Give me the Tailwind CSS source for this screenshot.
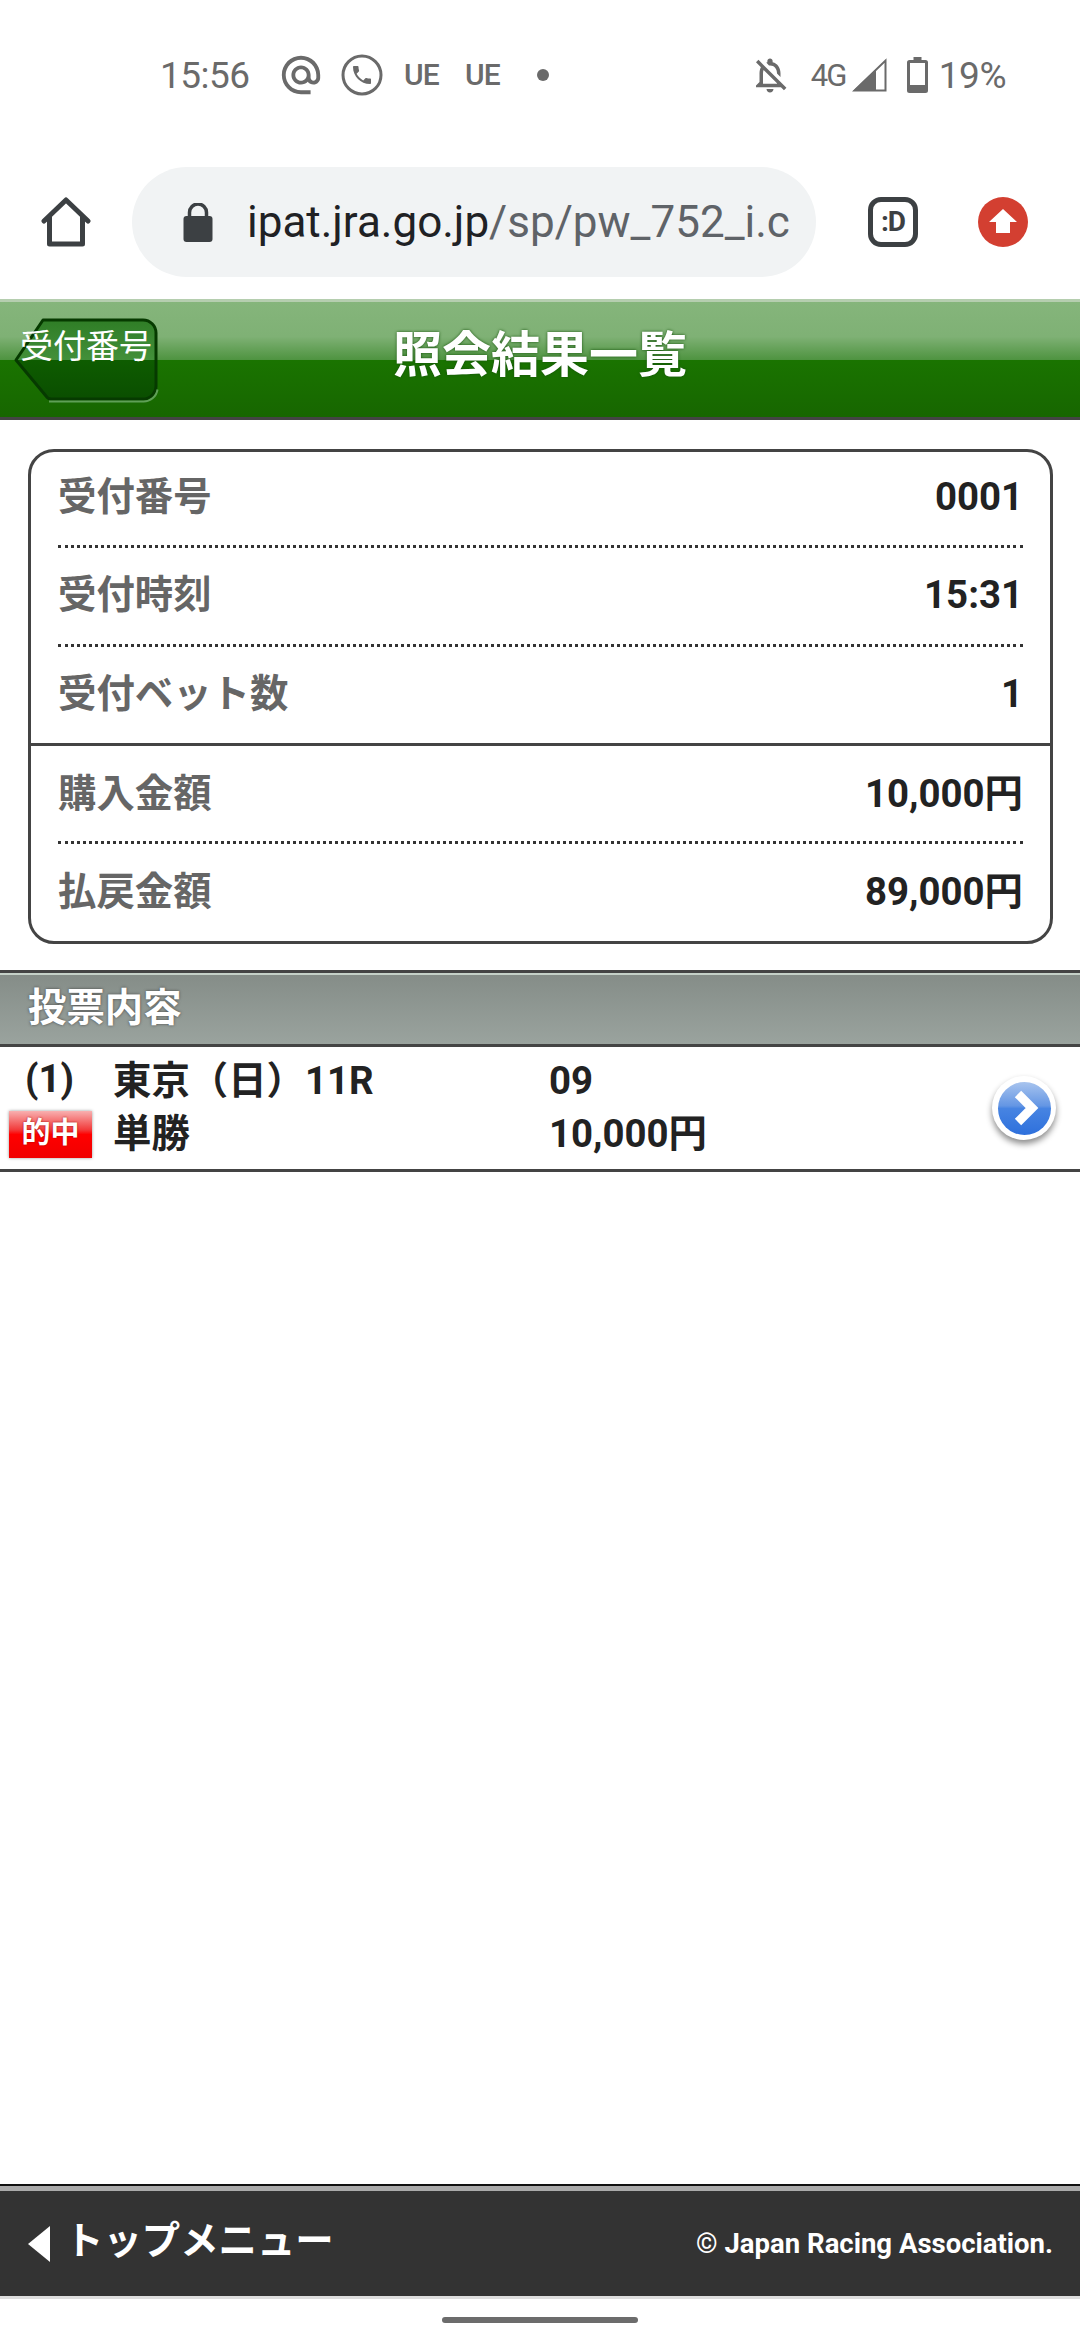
<!DOCTYPE html>
<html lang="ja">
<head>
    <meta charset="UTF-8">
    <meta name="viewport" content="width=device-width, initial-scale=1.0">
    <title>照会結果一覧</title>
    <script src="https://cdn.jsdelivr.net/npm/@tailwindcss/browser@4"></script>
</head>
<body class="bg-white font-['Roboto','Noto_Sans_CJK_JP',sans-serif]">
<div class="flex flex-col w-[1080px] h-[2340px] overflow-hidden">

    <!-- Status bar -->
    <div class="flex items-center h-[150px] shrink-0 pl-[160px] pr-[74px] text-[#6a6a6a]">
        <span class="text-[37px] leading-none w-[88px] tracking-[-0.5px] whitespace-nowrap">15:56</span>
        <svg class="ml-[30px] w-[46px] h-[46px]" viewBox="0 0 24 24" fill="currentColor"><path d="M12 2C6.48 2 2 6.48 2 12s4.48 10 10 10h5v-2h-5c-4.34 0-8-3.66-8-8s3.66-8 8-8 8 3.66 8 8v1.43c0 .79-.71 1.57-1.5 1.57s-1.5-.78-1.5-1.57V12c0-2.76-2.24-5-5-5s-5 2.24-5 5 2.24 5 5 5c1.38 0 2.64-.56 3.54-1.47.65.89 1.77 1.47 2.96 1.47 1.97 0 3.5-1.6 3.5-3.57V12c0-5.52-4.48-10-10-10zm0 13c-1.66 0-3-1.34-3-3s1.34-3 3-3 3 1.34 3 3-1.34 3-3 3z"/></svg>
        <svg class="ml-[17px] w-[42px] h-[42px]" viewBox="0 0 42 42" fill="none"><circle cx="21" cy="21" r="19" stroke="currentColor" stroke-width="3"/><g transform="translate(9 9)" fill="currentColor"><path d="M6.62 10.79c1.44 2.83 3.76 5.14 6.59 6.59l2.2-2.2c.27-.27.67-.36 1.02-.24 1.12.37 2.33.57 3.57.57.55 0 1 .45 1 1V20c0 .55-.45 1-1 1-9.39 0-17-7.61-17-17 0-.55.45-1 1-1h3.5c.55 0 1 .45 1 1 0 1.25.2 2.45.57 3.57.11.35.03.74-.25 1.02l-2.2 2.2z"/></g></svg>
        <span class="ml-[21px] w-[37px] text-[30px] leading-none font-medium tracking-[-1px]">UE</span>
        <span class="ml-[24px] w-[37px] text-[30px] leading-none font-medium tracking-[-1px]">UE</span>
        <span class="ml-[35px] w-[12px] h-[12px] rounded-full bg-[#6a6a6a]"></span>

        <svg class="ml-auto w-[42px] h-[42px]" viewBox="0 0 24 24" fill="currentColor"><path d="M12 22c1.1 0 2-.9 2-2h-4c0 1.1.9 2 2 2zm0-15.5c2.49 0 4 2.02 4 4.5v.1l2 2V11c0-3.07-1.63-5.64-4.5-6.32V4c0-.83-.67-1.5-1.5-1.5s-1.5.67-1.5 1.5v.68c-.24.06-.47.15-.69.23l1.64 1.64c.18-.02.36-.05.55-.05zM5.41 3.35L4 4.76l2.81 2.81C6.29 8.57 6 9.74 6 11v5l-2 2v1h14.24l1.74 1.74 1.41-1.41L5.41 3.35zM16 17H8v-6c0-.68.12-1.32.34-1.9L16 16.76V17z"/></svg>
        <span class="ml-[20px] w-[36px] text-[31px] leading-none tracking-[-2px]">4G</span>
        <svg class="ml-[5px] w-[35px] h-[34px]" viewBox="0 0 35 34" fill="none"><path d="M33.5 2.5V32.5H2.5Z" stroke="currentColor" stroke-width="2"/><path d="M24 11V33H1Z" fill="currentColor"/></svg>
        <svg class="ml-[20px] w-[21px] h-[36px]" viewBox="0 0 21 36" fill="none"><path d="M6.5 0h8v3h4a2.5 2.5 0 0 1 2.5 2.5v28a2.5 2.5 0 0 1-2.5 2.5h-16A2.5 2.5 0 0 1 0 33.500v-28A2.500 2.500 0 0 1 2.500 3h4z" fill="currentColor"/><rect x="3" y="6" width="15" height="22" fill="#fff"/></svg>
        <span class="ml-[11px] text-[37px] leading-none tracking-[-0.5px]">19%</span>
    </div>

    <!-- Browser toolbar -->
    <div class="flex items-center h-[149px] shrink-0 pb-[5px]">
        <svg class="ml-[41px] w-[50px] h-[50px]" viewBox="0 0 50 50" fill="none"><path d="M3 24 25 3l22 21M8.500 19.500V47h33V19.500" stroke="#3c4043" stroke-width="5" stroke-linejoin="round" stroke-linecap="round"/></svg>
        <div class="ml-[41px] flex items-center w-[684px] h-[110px] rounded-full bg-[#f1f3f4] pl-[51px]">
            <svg class="w-[30px] h-[39px] shrink-0" viewBox="0 0 30 39"><path d="M6.500 14V9.500a8.500 8.500 0 0 1 17 0V14" fill="none" stroke="#3c4043" stroke-width="3.500"/><rect x="0.500" y="13" width="29" height="26" rx="3" fill="#3c4043"/></svg>
            <div class="ml-[34px] whitespace-nowrap text-[44px] leading-none text-[#5f6368]"><span class="text-[#202124]">ipat.jra.go.jp</span>/sp/pw_752_i.c</div>
        </div>
        <div class="ml-[52px] flex items-center justify-center w-[50px] h-[50px] rounded-[13px] border-[5px] border-[#3c4043] text-[28px] font-bold text-[#3c4043] leading-none tracking-[-1px]">:D</div>
        <div class="ml-[60px] flex items-center justify-center w-[50px] h-[50px] rounded-full bg-[#d33f31]">
            <svg class="w-[28px] h-[26px]" viewBox="0 0 28 26" fill="#fff"><path d="M14 0 28 13H21V24H7V13H0Z"/></svg>
        </div>
    </div>

    <!-- Green header -->
    <div class="relative flex items-center justify-center h-[121px] shrink-0 border-t-[3px] border-b-[3px] border-t-[#b5ceaf] border-b-[#444] bg-[linear-gradient(to_bottom,#85b57b_0%,#7fb175_30%,#4f9441_50%,#1a7400_50%,#176600_100%)]">
        <div class="absolute left-[13px] top-[15px] w-[146px] h-[86px]">
            <svg class="absolute inset-0 w-full h-full" viewBox="0 0 146 86" fill="none">
                <defs>
                    <linearGradient id="backFill" x1="0" y1="0" x2="0" y2="1">
                        <stop offset="0" stop-color="#2f7d26"/>
                        <stop offset="0.51" stop-color="#43903a"/>
                        <stop offset="0.51" stop-color="#0e5c00"/>
                        <stop offset="1" stop-color="#0a4e00"/>
                    </linearGradient>
                </defs>
                <path d="M30 3H130a13 13 0 0 1 13 13V69a13 13 0 0 1-13 13H38a6 6 0 0 1-5-3L3 43Z" fill="url(#backFill)" stroke="#063a00" stroke-width="3" stroke-linejoin="round"/>
                <path d="M36 84.500H130a14 14 0 0 0 14.500-12" stroke="#5f9f56" stroke-width="2"/>
            </svg>
            <span class="absolute left-[7px] top-[10px] text-[33px] leading-[40px] text-white whitespace-nowrap">受付番号</span>
        </div>
        <h1 class="text-[49px] leading-none font-bold text-white pb-[8px] [text-shadow:0_0_3px_#14500a]">照会結果一覧</h1>
    </div>

    <!-- Summary card -->
    <div class="flex flex-col ml-[28px] mr-[27px] mt-[29px] h-[495px] shrink-0 rounded-[26px] border-[3px] border-[#444] px-[27px] text-[38.4px] font-bold">
        <div class="flex items-center justify-between h-[96px] pb-[3px] border-b-[3px] border-dotted border-[#333]">
            <span class="text-[#666]">受付番号</span><span class="text-[#222]">0001</span>
        </div>
        <div class="flex items-center justify-between h-[99px] pb-[2px] border-b-[3px] border-dotted border-[#333]">
            <span class="text-[#666]">受付時刻</span><span class="text-[#222]">15:31</span>
        </div>
        <div class="-mx-[27px] px-[27px] flex items-center justify-between h-[99px] pb-[2px] border-b-[3px] border-[#444]">
            <span class="text-[#666]">受付ベット数</span><span class="text-[#222]">1</span>
        </div>
        <div class="flex items-center justify-between h-[98px] border-b-[3px] border-dotted border-[#333]">
            <span class="text-[#666]">購入金額</span><span class="text-[#222]">10,000円</span>
        </div>
        <div class="flex items-center justify-between h-[97px] pb-[2px]">
            <span class="text-[#666]">払戻金額</span><span class="text-[#222]">89,000円</span>
        </div>
    </div>

    <!-- Bet section -->
    <div class="flex items-center mt-[26px] h-[77px] shrink-0 border-t-[3px] border-b-[3px] border-t-[#444] border-b-[#444] bg-[linear-gradient(to_bottom,#c5d1c8_0,#c5d1c8_2px,#858d88_2px,#9aa39e_100%)] pl-[28px]">
        <span class="text-[38.4px] font-bold text-white pb-[2px] [text-shadow:0_0_3px_#444]">投票内容</span>
    </div>
    <div class="flex items-center h-[125px] shrink-0 border-b-[3px] border-[#444] text-[38.4px] font-bold text-[#222]">
        <div class="flex flex-col flex-1">
            <div class="flex items-center h-[52px] pb-[3px]">
                <span class="w-[113px] pl-[25px] pb-[3px]">(1)</span>
                <span class="w-[436px]">東京（日）11R</span>
                <span>09</span>
            </div>
            <div class="flex items-center h-[52px]">
                <span class="ml-[9px] mr-[21px] flex items-center justify-center w-[83px] h-[47px] bg-[linear-gradient(to_bottom,#f8b0b0_0%,#f23a3a_40%,#ff0000_50%,#f00000_100%)] shadow-[0_0_3px_#999] text-[29px] text-white [text-shadow:0_0_2px_#900]">的中</span>
                <span class="w-[436px]">単勝</span>
                <span>10,000円</span>
            </div>
        </div>
        <div class="mr-[24px] flex items-center justify-center w-[64px] h-[64px] rounded-full bg-white shadow-[0_4px_6px_rgba(0,0,0,0.45)]">
            <div class="flex items-center justify-center w-[53px] h-[53px] rounded-full bg-[linear-gradient(to_bottom,#a8c4ee_0%,#6496e4_45%,#4784e2_50%,#2e70dc_100%)]">
                <svg class="w-[26px] h-[36px] ml-[4px]" viewBox="0 0 26 36" fill="none"><path d="M5 4 19 18 5 32" stroke="#fff" stroke-width="9"/></svg>
            </div>
        </div>
    </div>

    <div class="flex-1"></div>

    <!-- Footer -->
    <div class="flex items-center justify-between h-[113px] shrink-0 border-t-[5px] border-b-[3px] border-t-[#aaa] border-b-[#ddd] bg-[#333] pl-[28px] pr-[27px] shadow-[0_-2px_0_#111]">
        <div class="flex items-center">
            <svg class="w-[22px] h-[36px]" viewBox="0 0 22 36" fill="#fff"><path d="M22 0V36L0 18Z"/></svg>
            <span class="ml-[15px] text-[38.4px] leading-none font-bold text-white pb-[4px]">トップメニュー</span>
        </div>
        <span class="text-[27.5px] leading-none font-bold text-white">© Japan Racing Association.</span>
    </div>

    <!-- Home indicator -->
    <div class="flex items-center justify-center h-[41px] shrink-0">
        <div class="w-[196px] h-[6px] rounded-full bg-[#6c6c6c]"></div>
    </div>
</div>
</body>
</html>
